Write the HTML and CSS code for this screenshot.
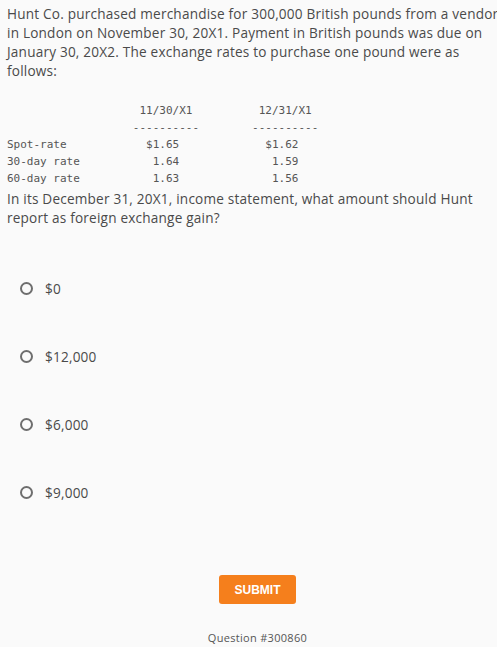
FILE: index.html
```html
<!DOCTYPE html>
<html>
<head>
<meta charset="utf-8">
<link rel="stylesheet" href="styles.css">
</head>
<body>
<div class="page">
  <p class="stem">Hunt Co. purchased merchandise for 300,000 British pounds from a vendor<br>in London on November 30, 20X1. Payment in British pounds was due on<br>January 30, 20X2. The exchange rates to purchase one pound were as<br>follows:</p>
<pre class="rates">                    11/30/X1          12/31/X1
                   ----------        ----------
Spot-rate            $1.65             $1.62
30-day rate           1.64              1.59
60-day rate           1.63              1.56</pre>
  <p class="stem ask">In its December 31, 20X1, income statement, what amount should Hunt<br>report as foreign exchange gain?</p>
  <div class="options">
    <label class="option"><span class="radio"></span><span class="label">$0</span></label>
    <label class="option"><span class="radio"></span><span class="label">$12,000</span></label>
    <label class="option"><span class="radio"></span><span class="label">$6,000</span></label>
    <label class="option"><span class="radio"></span><span class="label">$9,000</span></label>
  </div>
  <div class="actions">
    <button class="submit">SUBMIT</button>
    <div class="qid">Question #300860</div>
  </div>
</div>
</body>
</html>
```
FILE: styles.css
```css
html, body {
  margin: 0;
  padding: 0;
  background: #fafafa;
  overflow: hidden;
}
.page {
  padding: 4px 0 0 7px;
  font-family: "Open Sans", "Liberation Sans", sans-serif;
  color: #4a4a4a;
}
.stem {
  margin: 0;
  font-size: 13.6px;
  line-height: 19px;
  letter-spacing: 0.2px;
  white-space: nowrap;
}
.rates {
  margin: 22px 0 0 0;
  font-family: "DejaVu Sans Mono", monospace;
  font-size: 11px;
  line-height: 17px;
  color: #555;
}
.ask {
  margin-top: 2px;
}
.options {
  margin-top: 51px;
  display: flex;
  flex-direction: column;
  gap: 48px;
}
.option {
  display: flex;
  align-items: center;
  height: 20px;
  font-size: 13.6px;
  letter-spacing: 0.2px;
}
.radio {
  width: 9px;
  height: 9px;
  border: 2px solid #6e6e6e;
  border-radius: 50%;
  margin-left: 13px;
  margin-right: 12px;
  flex: none;
}
.actions {
  margin-top: 73px;
  display: flex;
  flex-direction: column;
  align-items: center;
  padding-right: 7px;
}
.submit {
  margin-left: 18px;
  width: 77px;
  height: 29px;
  border: none;
  border-radius: 3px;
  background: #f57f1c;
  color: #fff;
  font-family: "Liberation Sans", Arial, sans-serif;
  font-weight: bold;
  font-size: 12px;
  padding: 0;
}
.qid {
  margin-top: 27px;
  margin-left: 18px;
  font-size: 11px;
  line-height: 14px;
  letter-spacing: 0.3px;
  color: #555;
}
```
